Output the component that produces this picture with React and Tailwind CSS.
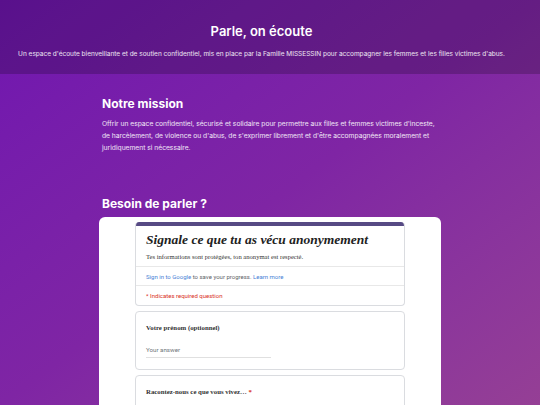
export default function App() {
  return (
    <div className="h-[405px] overflow-hidden bg-gradient-to-br from-[#7015b0] via-[#7f25a4] to-[#953f95] font-['Inter','Liberation_Sans',sans-serif] text-white">
      <header className="bg-black/20 h-[74px] flex flex-col items-center pt-[22px] pr-[17px]">
        <h1 className="text-[13px] font-semibold leading-[18px]">Parle, on écoute</h1>
        <p className="text-[6.5px] leading-[10px] mt-[9px] text-white/90 whitespace-nowrap">
          Un espace d'écoute bienveillante et de soutien confidentiel, mis en place par la Famille MISSESSIN pour accompagner les femmes et les filles victimes d'abus.
        </p>
      </header>

      <main className="w-[342px] mx-auto pt-[22px]">
        <section className="px-[3px]">
          <h2 className="text-[12px] font-bold leading-[16px]">Notre mission</h2>
          <p className="text-[6.7px] leading-[12px] mt-[6px] text-white/90">
            Offrir un espace confidentiel, sécurisé et solidaire pour permettre aux filles et femmes victimes d'inceste, de harcèlement, de violence ou d'abus, de s'exprimer librement et d'être accompagnées moralement et juridiquement si nécessaire.
          </p>
        </section>

        <section className="mt-[42px]">
          <h2 className="text-[12px] font-bold leading-[16px] px-[3px]">Besoin de parler ?</h2>
          <div className="mt-[5px] bg-white rounded-[6px] pt-[5px] pb-[20px] flex flex-col items-center gap-[5px] text-[#202124]">
            <div className="w-[270px] shrink-0 rounded-[4px] border border-[#dadce0] border-t-0 overflow-hidden">
              <div className="h-[4px] bg-[#574a84]" />
              <div className="px-[10px] pt-[5px] pb-[5px] border-b border-[#e8e8e8]">
                <div className="font-['Liberation_Serif',serif] italic font-bold text-[13.5px] leading-[18px] whitespace-nowrap text-[#222]">
                  Signale ce que tu as vécu anonymement
                </div>
                <div className="font-['Liberation_Serif',serif] text-[6.6px] leading-[8px] mt-[4px] text-[#333] whitespace-nowrap">
                  Tes informations sont protégées, ton anonymat est respecté.
                </div>
              </div>
              <div className="px-[10px] h-[19px] flex items-center border-b border-[#e8e8e8] font-['Roboto',sans-serif] text-[6px] text-[#5f6368] whitespace-nowrap">
                <span className="text-[#4a7fd6]">Sign in to Google</span>
                <span>&nbsp;to save your progress.&nbsp;</span>
                <span className="text-[#4a7fd6]">Learn more</span>
              </div>
              <div className="px-[10px] h-[19px] flex items-center font-['Roboto',sans-serif] text-[6px] text-[#d93025]">
                * Indicates required question
              </div>
            </div>

            <div className="w-[270px] h-[59px] shrink-0 rounded-[4px] border border-[#dadce0] px-[10px] pt-[12px]">
              <div className="font-['Liberation_Serif',serif] font-bold text-[6.8px] leading-[8px] text-[#333]">
                Votre prénom (optionnel)
              </div>
              <div className="mt-[14px] w-[125px] border-b border-[#e0e0e0] pb-[2px] font-['Roboto',sans-serif] text-[6.2px] text-[#70757a]">
                Your answer
              </div>
            </div>

            <div className="w-[270px] h-[59px] shrink-0 rounded-[4px] border border-[#dadce0] px-[10px] pt-[12px]">
              <div className="font-['Liberation_Serif',serif] font-bold text-[6.8px] leading-[8px] text-[#333]">
                Racontez-nous ce que vous vivez… <span className="text-[#d93025]">*</span>
              </div>
            </div>
          </div>
        </section>
      </main>
    </div>
  )
}
